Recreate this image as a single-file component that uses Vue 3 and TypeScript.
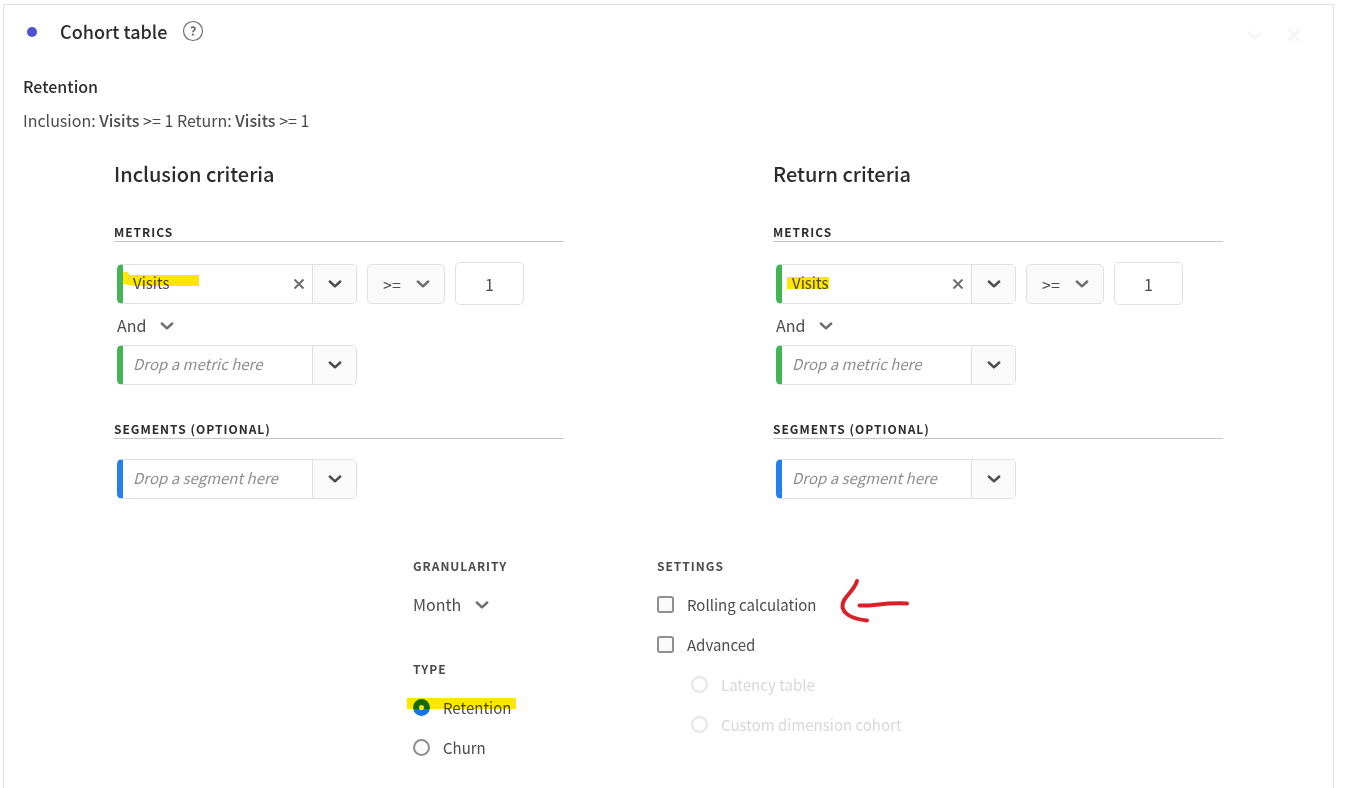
<script setup lang="ts">
import { ref } from 'vue'

interface Criteria {
  id: string
  title: string
  metric: string
  join: string
  operator: string
  value: string
  extraMetric: string
  segment: string
}

const criteria = ref<Criteria[]>([
  { id: 'inclusion', title: 'Inclusion criteria', metric: 'Visits', join: 'And', operator: '>=', value: '1', extraMetric: '', segment: '' },
  { id: 'return', title: 'Return criteria', metric: 'Visits', join: 'And', operator: '>=', value: '1', extraMetric: '', segment: '' },
])

const granularity = ref('Month')
const type = ref('Retention')
const rolling = ref(false)
const advanced = ref(false)
const advancedMode = ref('')
</script>

<template>
  <main class="panel">
    <header class="panel-head">
      <span class="dot"></span>
      <h1>Cohort table</h1>
      <button class="help" type="button" aria-label="Help">
        <svg width="22" height="22" viewBox="0 0 22 22">
          <circle cx="11" cy="11" r="9.5" fill="none" stroke="#6e6e6e" stroke-width="1.2" />
          <path d="M8.8 7.800c.7-.5 1.300-.7 2.100-.7 1.300 0 2.100.6 2.100 1.600 0 1.600-2.100 1.700-2.100 3.500" fill="none" stroke="#6e6e6e" stroke-width="1.700" />
          <circle cx="10.900" cy="14.600" r="1.100" fill="#6e6e6e" />
        </svg>
      </button>
      <div class="actions">
        <button type="button" aria-label="Collapse">
          <svg width="18" height="18" viewBox="0 0 18 18"><path d="M2 5.500l7 7 7-7" /></svg>
        </button>
        <button type="button" aria-label="Close">
          <svg width="18" height="18" viewBox="0 0 18 18"><path d="M3 3l12 12M15 3L3 15" /></svg>
        </button>
      </div>
    </header>

    <section class="summary">
      <h2>Retention</h2>
      <p>Inclusion: <b>Visits</b> &gt;= 1 Return: <b>Visits</b> &gt;= 1</p>
    </section>

    <div class="criteria">
      <section v-for="c in criteria" :key="c.id" class="column">
        <h2>{{ c.title }}</h2>
        <h3>Metrics</h3>
        <div class="row">
          <div class="field metric">
            <input v-model="c.metric" type="text" aria-label="Metric" />
            <button class="clear" type="button" aria-label="Clear metric" @click="c.metric = ''">
              <svg width="12" height="12" viewBox="0 0 12 12"><path d="M1.500 1.500l9 9M10.500 1.500l-9 9" /></svg>
            </button>
            <button class="open" type="button" aria-label="Choose a metric">
              <svg class="chevron dark" width="14" height="8" viewBox="0 0 14 8"><path d="M1.800 1.500L7 6.300l5.200-4.800" /></svg>
            </button>
            <svg v-if="c.id === 'inclusion'" class="marker" width="240" height="40" viewBox="0 0 240 40">
              <path d="M6 8h4l3 3h69v11H18l-12-2z" />
            </svg>
            <svg v-else class="marker" width="240" height="40" viewBox="0 0 240 40">
              <path d="M11 13h42v12H11z" />
            </svg>
          </div>
          <div class="picker boxed">
            <select v-model="c.operator" aria-label="Operator">
              <option>&gt;=</option>
              <option>&lt;=</option>
            </select>
            <svg class="chevron" width="14" height="8" viewBox="0 0 14 8"><path d="M1.800 1.500L7 6.300l5.200-4.800" /></svg>
          </div>
          <input v-model="c.value" class="number" type="text" inputmode="numeric" aria-label="Value" />
        </div>
        <div class="picker join">
          <select v-model="c.join" aria-label="Join">
            <option>And</option>
            <option>Or</option>
          </select>
          <svg class="chevron" width="14" height="8" viewBox="0 0 14 8"><path d="M1.800 1.500L7 6.300l5.200-4.800" /></svg>
        </div>
        <div class="field metric">
          <input v-model="c.extraMetric" type="text" placeholder="Drop a metric here" aria-label="Additional metric" />
          <button class="open" type="button" aria-label="Choose a metric">
            <svg class="chevron dark" width="14" height="8" viewBox="0 0 14 8"><path d="M1.800 1.500L7 6.300l5.200-4.800" /></svg>
          </button>
        </div>
        <h3>Segments (optional)</h3>
        <div class="field segment">
          <input v-model="c.segment" type="text" placeholder="Drop a segment here" aria-label="Segment" />
          <button class="open" type="button" aria-label="Choose a segment">
            <svg class="chevron dark" width="14" height="8" viewBox="0 0 14 8"><path d="M1.800 1.500L7 6.300l5.200-4.800" /></svg>
          </button>
        </div>
      </section>
    </div>

    <div class="options">
      <div>
        <h4 id="granularity">Granularity</h4>
        <div class="picker month">
          <select v-model="granularity" aria-labelledby="granularity">
            <option>Month</option>
            <option>Week</option>
          </select>
          <svg class="chevron" width="14" height="8" viewBox="0 0 14 8"><path d="M1.800 1.500L7 6.300l5.200-4.800" /></svg>
        </div>
        <h4 class="type">Type</h4>
        <label class="choice">
          <input v-model="type" type="radio" name="type" value="Retention" />
          <span>Retention</span>
          <svg class="marker retention" width="110" height="14" viewBox="0 0 110 14"><path d="M0 1h109v11H0z" /></svg>
        </label>
        <label class="choice">
          <input v-model="type" type="radio" name="type" value="Churn" />
          <span>Churn</span>
        </label>
      </div>
      <div>
        <h4>Settings</h4>
        <label class="choice">
          <input v-model="rolling" type="checkbox" />
          <span>Rolling calculation</span>
          <svg class="arrow" width="72" height="46" viewBox="838 578 72 46">
            <path d="M857 581C854 592 841 598 842.500 607C844 615 854 619 867 620.500" />
            <path d="M859.500 605.500C874 606.500 880 602.500 907 603.500" />
          </svg>
        </label>
        <label class="choice">
          <input v-model="advanced" type="checkbox" />
          <span>Advanced</span>
        </label>
        <div class="nested">
          <label class="choice">
            <input v-model="advancedMode" type="radio" name="mode" value="latency" disabled />
            <span>Latency table</span>
          </label>
          <label class="choice">
            <input v-model="advancedMode" type="radio" name="mode" value="custom" disabled />
            <span>Custom dimension cohort</span>
          </label>
        </div>
      </div>
    </div>
  </main>
</template>

<style>
html,
body {
  background: #fff;
}
</style>

<style scoped>
* {
  box-sizing: border-box;
}
.panel {
  margin: 0 12px 0 3px;
  min-height: calc(100vh - 4px);
  border: 1px solid #e1e1e1;
  border-bottom: 0;
  background: #fff;
  color: #4b4b4b;
  font-family: "Noto Sans CJK SC", "Noto Sans", sans-serif;
  font-size: 16px;
  line-height: 24px;
}
:global(#app) {
  padding-top: 4px;
}
h1,
h2,
h3,
h4,
p {
  margin: 0;
}
button {
  display: flex;
  align-items: center;
  justify-content: center;
  padding: 0;
  border: 0;
  background: none;
}
input,
select {
  font: inherit;
  color: inherit;
  margin: 0;
}
svg {
  display: block;
  flex: none;
}
.panel-head {
  display: flex;
  align-items: center;
  height: 54px;
  padding: 0 30px 0 23px;
}
.dot {
  width: 10px;
  height: 10px;
  border-radius: 50%;
  background: #5151d3;
}
h1 {
  margin: 0 15px 0 23px;
  padding-bottom: 2px;
  font-size: 18px;
  font-weight: 500;
  color: #2c2c2c;
}
.help {
  padding-bottom: 2px;
}
.actions {
  display: flex;
  gap: 21px;
  margin-left: auto;
  padding-top: 6px;
}
.actions path {
  fill: none;
  stroke: #f4f4f4;
  stroke-width: 2;
}
.summary {
  padding: 15px 19px 0;
}
.summary h2 {
  font-size: 16px;
  font-weight: 500;
  color: #2c2c2c;
}
.summary p {
  margin-top: 10px;
}
.summary b {
  font-weight: 500;
}
.criteria {
  display: flex;
  justify-content: space-between;
  gap: 40px;
  padding: 27px 110px 0;
}
.column {
  flex: 0 1 450px;
}
.column h2 {
  font-size: 20px;
  line-height: 30px;
  font-weight: 500;
  color: #2c2c2c;
}
h3,
h4 {
  font-size: 12px;
  line-height: 16px;
  font-weight: 700;
  letter-spacing: 1px;
  text-transform: uppercase;
}
h3 {
  margin: 36px 0 20px;
  padding-bottom: 2px;
  border-bottom: 1px solid #c8c8c8;
  line-height: 14px;
  color: #2c2c2c;
}
.field + h3 {
  margin-top: 37px;
}
.row {
  display: flex;
  align-items: center;
  gap: 10px;
  height: 44px;
}
.field {
  position: relative;
  display: flex;
  width: 240px;
  height: 40px;
  margin-left: 3px;
  border: 1px solid #e1e1e1;
  border-left: 6px solid #44b556;
  border-radius: 5px;
}
.segment {
  border-left-color: #2680eb;
}
.field input {
  flex: 1;
  min-width: 0;
  padding: 0 0 2px 10px;
  border: 0;
  background: none;
  font-size: 15px;
}
.field input::placeholder {
  color: #8e8e8e;
  font-style: italic;
  opacity: 1;
}
.clear {
  width: 26px;
}
.clear path {
  fill: none;
  stroke: #6e6e6e;
  stroke-width: 2;
}
.open {
  width: 44px;
  border-left: 1px solid #e1e1e1;
  border-radius: 0 4px 4px 0;
  background: #fafafa;
}
.chevron path {
  fill: none;
  stroke: #6e6e6e;
  stroke-width: 2.400;
  stroke-linecap: round;
  stroke-linejoin: round;
}
.chevron.dark path {
  stroke: #4b4b4b;
}
.marker {
  position: absolute;
  top: -1px;
  left: -6px;
  fill: #ffe600;
  mix-blend-mode: multiply;
  pointer-events: none;
}
.picker {
  display: grid;
  align-items: center;
}
.picker select {
  grid-area: 1 / 1;
  height: 100%;
  padding: 0 0 2px;
  border: 0;
  background: none;
  appearance: none;
}
.picker .chevron {
  grid-area: 1 / 1;
  justify-self: end;
  pointer-events: none;
}
.boxed {
  width: 78px;
  height: 40px;
  padding-right: 14px;
  border: 1px solid #e1e1e1;
  border-radius: 5px;
  background: #fafafa;
}
.boxed select {
  padding: 0 0 0 15px;
}
.number {
  align-self: flex-start;
  width: 69px;
  height: 43px;
  padding: 0;
  border: 1px solid #e1e1e1;
  border-radius: 5px;
  background: #fff;
  text-align: center;
}
.join {
  width: 57px;
  height: 39px;
  margin-left: 3px;
}
.options {
  display: grid;
  grid-template-columns: 244px 267px;
  justify-content: center;
  padding-top: 59px;
}
h4 {
  margin-bottom: 11px;
}
.type {
  margin-top: 36px;
}
.month {
  width: 76px;
  height: 40px;
}
.choice {
  position: relative;
  display: flex;
  align-items: center;
  gap: 13px;
  height: 40px;
  font-size: 15px;
}
.choice input {
  flex: none;
  width: 17px;
  height: 17px;
  margin-bottom: 2px;
  border: 2px solid #8e8e8e;
  border-radius: 50%;
  background: #fafafa;
  appearance: none;
}
.choice input[type="checkbox"] {
  border-radius: 3px;
}
.choice input:checked {
  border: 6px solid #1473e6;
  background: #fff;
}
.choice input:disabled {
  border-color: #e6e6e6;
  background: #fdfdfd;
}
.choice input:disabled + span {
  color: #d8d8d8;
}
.nested {
  padding-left: 34px;
}
.retention {
  top: 9px;
}
.arrow {
  position: absolute;
  top: -7px;
  left: 181px;
  fill: none;
  stroke: #da2128;
  stroke-width: 4;
  stroke-linecap: round;
}
</style>
